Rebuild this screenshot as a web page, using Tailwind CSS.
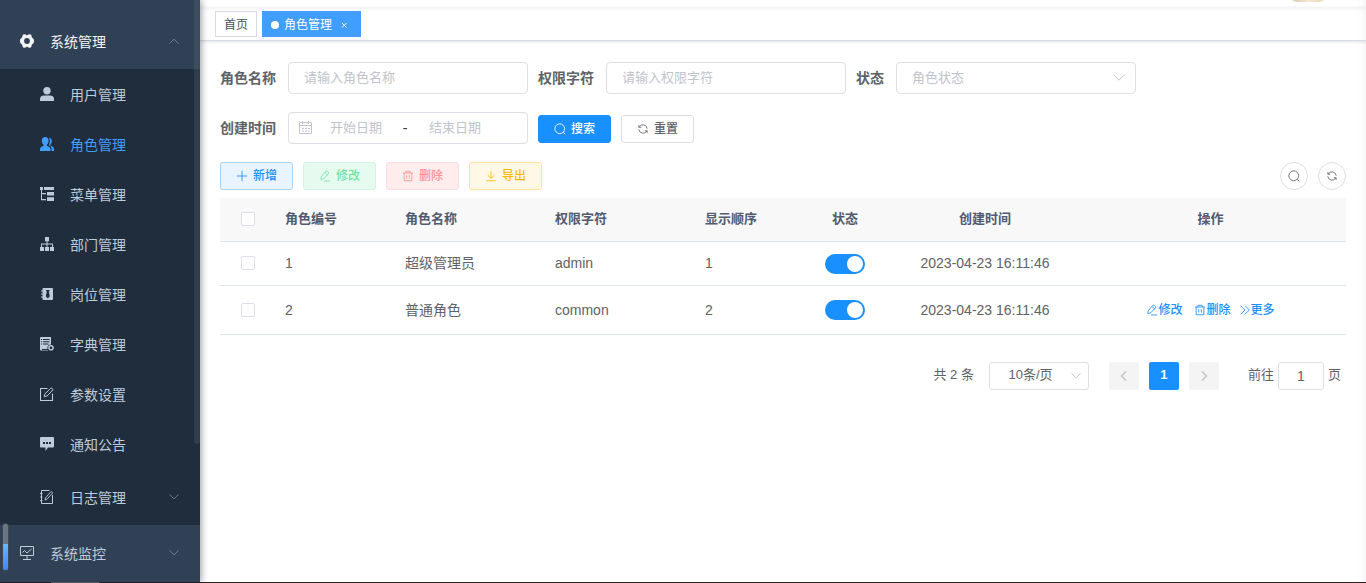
<!DOCTYPE html>
<html lang="zh-CN">
<head>
<meta charset="utf-8">
<meta name="viewport" content="width=device-width, initial-scale=1">
<title>角色管理</title>
<script src="https://cdn.jsdelivr.net/npm/@tailwindcss/browser@4"></script>
</head>
<body class="flex min-h-screen flex-col bg-white font-['Liberation_Sans','Noto_Sans_CJK_SC',sans-serif] text-sm text-[#606266]">

<!-- Shared line icons -->
<svg class="hidden" aria-hidden="true">
  <symbol id="search" viewBox="0 0 14 14"><g fill="none" stroke="currentColor"><circle cx="6.7" cy="6.7" r="5.7"/><path d="M10.7 10.700l2.300 2.300"/></g></symbol>
  <symbol id="refresh" viewBox="0 0 14 14"><g fill="none" stroke="currentColor"><path d="M2.2 5.2V2.4M2.2 4.9h2.7M2.6 4.6A5 5 0 0 1 11.9 6.6M11.8 8.8v2.8M11.8 9.1H9.1M11.4 9.4A5 5 0 0 1 2.1 7.4"/></g></symbol>
  <symbol id="plus" viewBox="0 0 14 14"><path d="M7 1v12M1 7h12" fill="none" stroke="currentColor"/></symbol>
  <symbol id="edit" viewBox="0 0 14 14"><path d="M2.2 11.200l.4-3.300 5.200-6.200a1.400 1.400 0 0 1 2 0l1 .9a1.400 1.400 0 0 1 0 2L5.400 10.300zM7 3l3 2.800M6 12.800h7" fill="none" stroke="currentColor"/></symbol>
  <symbol id="trash" viewBox="0 0 14 14"><path d="M1 3.500h12M4.500 3.500v-2h5v2M2.500 3.500v9h9v-9M5.500 6v4M8.500 6v4" fill="none" stroke="currentColor"/></symbol>
  <symbol id="download" viewBox="0 0 14 14"><path d="M7 1v8.500M3.200 6L7 9.700 10.800 6M1.500 12.500h11" fill="none" stroke="currentColor"/></symbol>
  <symbol id="more" viewBox="0 0 14 14"><path d="M2 2l5 5-5 5M7 2l5 5-5 5" fill="none" stroke="currentColor"/></symbol>
  <symbol id="down" viewBox="0 0 14 14"><path d="M1.800 4L7 9.200 12.200 4" fill="none" stroke="currentColor"/></symbol>
</svg>

<div class="flex flex-1">
  <aside class="relative z-10 w-[200px] shrink-0 bg-[#304156] pt-[13px] text-[#bfcbd9] shadow-[2px_0_6px_rgba(0,21,41,0.35)]">
    <nav>
      <a href="#" class="flex h-14 items-center gap-4 px-5 text-[#f4f4f5]">
        <svg class="size-3.5" viewBox="0 0 14 14"><path fill="currentColor" fill-rule="evenodd" d="M3.400.5Q4.800-.2 5.600.6 7 1.700 8.400.6 9.200-.2 10.600.5q1 .5.900 1.400-.1 1.600 1.300 2.400.8.400 1 1.300.4 1.400 0 2.800-.2.900-1 1.300-1.400.8-1.300 2.400.1.900-.9 1.400-1.400.7-2.200-.1-1.400-1.100-2.800 0-.8.800-2.200.1-1-.5-.9-1.400.1-1.600-1.300-2.400-.8-.4-1-1.300-.4-1.400 0-2.800.2-.9 1-1.300Q2.600 3.500 2.500 1.900 2.400 1 3.400.5zM7 4.100a2.900 2.900 0 1 0 0 5.800 2.900 2.900 0 0 0 0-5.800z"/></svg>
        <span class="flex-1 pt-px">系统管理</span>
        <svg class="size-3 rotate-180 text-[#7f8a98]"><use href="#down"/></svg>
      </a>
      <div class="bg-[#1f2d3d]">
        <a href="#" class="flex h-[50px] items-center gap-4 pr-5 pl-10">
          <svg class="size-3.5" viewBox="0 0 14 14" fill="currentColor"><circle cx="7" cy="3.700" r="3.700"/><path d="M0 14v-2c0-2.500 1.800-3.600 4-3.600h6c2.200 0 4 1.100 4 3.600v2z"/></svg>
          <span class="pt-0.5">用户管理</span>
        </a>
        <a href="#" class="flex h-[50px] items-center gap-4 pr-5 pl-10 text-[#409eff]">
          <svg class="size-3.5" viewBox="0 0 14 14" fill="currentColor"><path d="M5.200 0c2 0 3.400 1.500 3.400 3.700 0 1.800-.8 3.300-1.800 4v1c2.600.8 3.700 1.900 3.700 3.600V14H0v-1.700c0-1.700 1.100-2.800 3.600-3.600v-1c-1-.7-1.800-2.200-1.800-4C1.800 1.500 3.200 0 5.200 0zM8.800.9c1.900-.2 3.100 1.100 3.100 3.200 0 1.500-.6 2.800-1.600 3.500v.8c2.500.9 3.700 2 3.700 3.700V14h-2.500v-2.300c0-1.600-1-2.700-2.500-3.400V7.500c.7-1.200 1-2.500.9-4C9.800 2.400 9.500 1.600 8.800.9z"/></svg>
          <span class="pt-0.5">角色管理</span>
        </a>
        <a href="#" class="flex h-[50px] items-center gap-4 pr-5 pl-10">
          <svg class="size-3.5" viewBox="0 0 14 14" fill="currentColor"><path d="M0 0h3v3H2v3h4v1.200H2V12h4v1.200H1V3H0zM4 0h10v3H4zM7 5h7v3.500H7zM7 10.300h7V14H7z"/></svg>
          <span class="pt-0.5">菜单管理</span>
        </a>
        <a href="#" class="flex h-[50px] items-center gap-4 pr-5 pl-10">
          <svg class="size-3.5" viewBox="0 0 14 14" fill="currentColor"><path d="M5 0h4v4.300H7.500V6.500H13V10h1v4h-4v-4h2V7.500H7.500V10H9v4H5v-4h1.500V7.500H2V10h2v4H0v-4h1V6.500h5.500V4.300H5z"/></svg>
          <span class="pt-0.5">部门管理</span>
        </a>
        <a href="#" class="flex h-[50px] items-center gap-4 pr-5 pl-10">
          <svg class="size-3.5" viewBox="0 0 14 14" fill="currentColor"><path fill-rule="evenodd" d="M3.500 1H12q1 0 1 1v10q0 1-1 1H3.500q-1 0-1-1v-1.500H1v-1h1.500v-2H1v-1h1.500v-2H1v-1h1.500V2q0-1 1-1zM5.800 3l1 1.700-1 4.500 2 2.300 2-2.300-1-4.500 1-1.700z"/></svg>
          <span class="pt-0.5">岗位管理</span>
        </a>
        <a href="#" class="flex h-[50px] items-center gap-4 pr-5 pl-10">
          <svg class="size-3.5" viewBox="0 0 14 14"><path fill="currentColor" fill-rule="evenodd" d="M1 0h10v7.500a3.500 3.500 0 0 0-3.500 4.500H2v1h6v.5H1q-1 0-1-1V1q0-1 1-1zM1 2h1v1H1zM3 2h6.500v1H3zM1 4.300h1v1H1zM3 4.300h6.500v1H3zM1 6.600h1v1H1zM3 6.600h5.500v1H3z"/><circle cx="11" cy="10.800" r="2.100" fill="none" stroke="currentColor" stroke-width="1.400"/></svg>
          <span class="pt-0.5">字典管理</span>
        </a>
        <a href="#" class="flex h-[50px] items-center gap-4 pr-5 pl-10">
          <svg class="size-3.5" viewBox="0 0 14 14" fill="none" stroke="currentColor"><path d="M7.500 1.500h-7v12h12v-7" stroke-width="1.100"/><path d="M4.300 9.700l.6-2.800L11.200.8l2 1.900L7 9z"/></svg>
          <span class="pt-0.5">参数设置</span>
        </a>
        <a href="#" class="flex h-[50px] items-center gap-4 pr-5 pl-10">
          <svg class="size-3.5" viewBox="0 0 14 14"><path fill="currentColor" fill-rule="evenodd" d="M1 0h12q1 0 1 1v8.500q0 1-1 1H8L5.500 14v-3.500H1q-1 0-1-1V1q0-1 1-1zM3 5v2h2V5zM6 5v2h2V5zM9 5v2h2V5z"/></svg>
          <span class="pt-0.5">通知公告</span>
        </a>
        <a href="#" class="flex h-14 items-center gap-4 pr-5 pl-10">
          <svg class="size-3.5" viewBox="0 0 14 14" fill="none" stroke="currentColor"><path d="M12.500 5v8.500h-11V.5h8"/><path d="M0 3.500h2.500M0 7h2.500M0 10.500h2.500" stroke-width=".9"/><path d="M5 10l.6-2.300 5.500-6.200 1.600 1.400L7.200 9z" stroke-width=".9"/></svg>
          <span class="flex-1 pt-0.5">日志管理</span>
          <svg class="size-3 text-[#7f8a98]"><use href="#down"/></svg>
        </a>
      </div>
      <a href="#" class="flex h-14 items-center gap-4 px-5">
        <svg class="size-3.5" viewBox="0 0 14 14" fill="none" stroke="currentColor"><path d="M.5 .5h13v9H.5zM7 9.500V13M3 13.500h8"/><path d="M2.500 6.500l2-2 2.500 2.500L11.500 3"/></svg>
        <span class="flex-1 pt-0.5">系统监控</span>
        <svg class="size-3 text-[#7f8a98]"><use href="#down"/></svg>
      </a>
    </nav>
    <div class="absolute top-0 right-0 h-[444px] w-1.5 rounded-b bg-[#909399]/15"></div>
    <div class="absolute bottom-3 left-[3px] flex h-[46px] w-[5px] flex-col justify-end overflow-hidden rounded-full bg-[#6c7683] ring-1 ring-[#414750]"><div class="h-[26px] bg-linear-to-b from-[#66b8ff] to-[#3f86f5]"></div></div>
  </aside>

  <main class="min-w-0 flex-1 shadow-[inset_-10px_0_8px_-8px_rgba(0,0,0,0.05)]">
    <header class="flex h-[7px] items-end justify-end overflow-hidden pr-[38px] pb-[5px] shadow-[0_1px_4px_rgba(0,21,41,0.08)]">
      <div class="size-10 shrink-0 rounded-[10px] bg-linear-to-r from-[#d9bfa5] via-[#f3e8d0] to-[#e6d2b4]"></div>
    </header>
    <div class="flex h-[34px] items-center gap-[5px] border-b border-[#d8dce5] pl-[15px] text-xs shadow-[0_1px_3px_rgba(0,0,0,0.12)]">
      <a href="#" class="flex h-[26px] items-center border border-[#d8dce5] bg-white px-2 pt-0.5 text-[#495060]">首页</a>
      <a href="#" class="flex h-[26px] items-center border border-[#409eff] bg-[#409eff] px-2 pt-0.5 text-white"><span class="mr-[5px] size-2 rounded-full bg-white"></span>角色管理<svg class="ml-1 size-4" viewBox="0 0 16 16"><path d="M6 6l4.500 4.500M10.500 6L6 10.500" stroke="currentColor"/></svg></a>
    </div>

    <div class="px-5 pt-[21px]">
      <form class="flex flex-wrap items-center gap-x-2.5 gap-y-[18px]">
        <div class="flex items-center">
          <label for="name" class="pr-3 pb-px font-bold">角色名称</label>
          <input id="name" type="text" placeholder="请输入角色名称" class="h-8 w-60 rounded border border-[#dcdfe6] px-[15px] pb-0.5 text-[13px] outline-none placeholder:text-[#c0c4cc]">
        </div>
        <div class="flex items-center">
          <label for="key" class="pr-3 pb-px font-bold">权限字符</label>
          <input id="key" type="text" placeholder="请输入权限字符" class="h-8 w-60 rounded border border-[#dcdfe6] px-[15px] pb-0.5 text-[13px] outline-none placeholder:text-[#c0c4cc]">
        </div>
        <div class="flex items-center">
          <label for="status" class="pr-3 pb-px font-bold">状态</label>
          <div class="relative">
            <select id="status" class="block h-8 w-60 appearance-none rounded border border-[#dcdfe6] bg-white px-[15px] text-[13px] text-[#c0c4cc] outline-none"><option>角色状态</option><option>正常</option><option>停用</option></select>
            <svg class="pointer-events-none absolute top-[9px] right-[10px] size-3.5 text-[#c0c4cc]"><use href="#down"/></svg>
          </div>
        </div>
        <div class="flex w-full items-center">
          <label for="begin" class="pr-3 font-bold">创建时间</label>
          <div class="mr-2.5 flex h-8 w-60 items-center rounded border border-[#dcdfe6] px-2.5 text-[13px]">
            <svg class="size-3.5 shrink-0 text-[#c0c4cc]" viewBox="0 0 14 14" fill="none" stroke="currentColor"><path d="M.5 1.500h12v11H.5zM.5 4.500h12M3.500 0v3M9.500 0v3M3 7.500h2M6 7.500h2M9 7.500h2M3 10h2M6 10h2M9 10h2"/></svg>
            <input id="begin" type="text" placeholder="开始日期" class="w-[86px] text-center outline-none placeholder:text-[#c0c4cc]">
            <span class="w-3 text-center text-sm text-[#303133]">-</span>
            <input aria-label="结束日期" type="text" placeholder="结束日期" class="w-[88px] text-center outline-none placeholder:text-[#c0c4cc]">
          </div>
          <div class="flex gap-2.5 pt-0.5 text-xs font-medium">
            <button type="button" class="flex h-7 items-center gap-[5px] rounded-[3px] border border-[#1890ff] bg-[#1890ff] px-[15px] text-white"><svg class="size-3"><use href="#search"/></svg>搜索</button>
            <button type="button" class="flex h-7 items-center gap-[5px] rounded-[3px] border border-[#dcdfe6] bg-white px-[15px]"><svg class="size-3"><use href="#refresh"/></svg>重置</button>
          </div>
        </div>
      </form>

      <div class="mt-[18px] mb-2 flex gap-2.5 text-xs font-medium">
        <button type="button" class="flex h-7 items-center gap-[5px] rounded-[3px] border border-[#a3d3ff] bg-[#e8f4ff] px-[15px] text-[#1890ff]"><svg class="size-3"><use href="#plus"/></svg>新增</button>
        <button type="button" class="flex h-7 items-center gap-[5px] rounded-[3px] border border-[#d0f5e0] bg-[#e7faf0] px-[15px] text-[#71e2a3]"><svg class="size-3"><use href="#edit"/></svg>修改</button>
        <button type="button" class="flex h-7 items-center gap-[5px] rounded-[3px] border border-[#ffdbdb] bg-[#ffeded] px-[15px] text-[#ff9292]"><svg class="size-3"><use href="#trash"/></svg>删除</button>
        <button type="button" class="flex h-7 items-center gap-[5px] rounded-[3px] border border-[#ffe399] bg-[#fff8e6] px-[15px] text-[#ffba00]"><svg class="size-3"><use href="#download"/></svg>导出</button>
        <button type="button" aria-label="隐藏搜索" class="ml-auto flex size-7 items-center justify-center rounded-full border border-[#dcdfe6]"><svg class="size-3"><use href="#search"/></svg></button>
        <button type="button" aria-label="刷新" class="flex size-7 items-center justify-center rounded-full border border-[#dcdfe6]"><svg class="size-3"><use href="#refresh"/></svg></button>
      </div>

      <table class="w-full table-fixed">
        <colgroup><col class="w-[55px]"><col class="w-[120px]"><col class="w-[150px]"><col class="w-[150px]"><col class="w-[100px]"><col class="w-[100px]"><col class="w-[180px]"><col></colgroup>
        <thead>
          <tr class="h-[43px] border-b border-[#dfe6ec] bg-[#f8f8f9] text-left text-[13px] text-[#515a6e]">
            <th><input type="checkbox" aria-label="全选" class="mx-auto block size-3.5 appearance-none rounded-xs border border-[#dcdfe6] bg-white"></th>
            <th class="px-2.5">角色编号</th><th class="px-2.5">角色名称</th><th class="px-2.5">权限字符</th><th class="px-2.5">显示顺序</th>
            <th class="text-center">状态</th><th class="text-center">创建时间</th><th class="text-center">操作</th>
          </tr>
        </thead>
        <tbody>
          <tr class="h-11 border-b border-[#dfe6ec]">
            <td><input type="checkbox" aria-label="选择超级管理员" class="mx-auto block size-3.5 appearance-none rounded-xs border border-[#dcdfe6] bg-white"></td>
            <td class="px-2.5">1</td><td class="px-2.5">超级管理员</td><td class="px-2.5">admin</td><td class="px-2.5">1</td>
            <td class="pt-px"><input type="checkbox" role="switch" aria-label="超级管理员状态" checked class="mx-auto flex h-5 w-10 appearance-none items-center justify-end rounded-full bg-[#1890ff] px-0.5 before:size-4 before:rounded-full before:bg-white before:content-['']"></td>
            <td class="text-center">2023-04-23 16:11:46</td><td></td>
          </tr>
          <tr class="h-[49px] border-b border-[#dfe6ec]">
            <td><input type="checkbox" aria-label="选择普通角色" class="mx-auto block size-3.5 appearance-none rounded-xs border border-[#dcdfe6] bg-white"></td>
            <td class="px-2.5">2</td><td class="px-2.5">普通角色</td><td class="px-2.5">common</td><td class="px-2.5">2</td>
            <td class="pt-px"><input type="checkbox" role="switch" aria-label="普通角色状态" checked class="mx-auto flex h-5 w-10 appearance-none items-center justify-end rounded-full bg-[#1890ff] px-0.5 before:size-4 before:rounded-full before:bg-white before:content-['']"></td>
            <td class="text-center">2023-04-23 16:11:46</td>
            <td>
              <div class="flex justify-center text-xs font-medium text-[#1890ff]">
                <button type="button" class="mr-3 flex items-center"><svg class="size-3"><use href="#edit"/></svg>修改</button>
                <button type="button" class="mr-2 flex items-center"><svg class="size-3"><use href="#trash"/></svg>删除</button>
                <button type="button" class="flex items-center"><svg class="size-3"><use href="#more"/></svg>更多</button>
              </div>
            </td>
          </tr>
        </tbody>
      </table>

      <div class="mt-[27px] flex h-7 items-center justify-end pr-[5px] text-[13px]">
        <span class="mr-[15px]">共 2 条</span>
        <div class="relative mr-5">
          <select aria-label="每页条数" class="block h-7 w-[100px] appearance-none rounded-[3px] border border-[#dcdfe6] bg-white pr-[17px] text-center outline-none"><option>10条/页</option><option>20条/页</option></select>
          <svg class="pointer-events-none absolute top-2 right-[7px] size-3 text-[#c0c4cc]"><use href="#down"/></svg>
        </div>
        <button type="button" aria-label="上一页" class="mr-2.5 flex h-7 w-[30px] items-center justify-center rounded-xs bg-[#f4f4f5] text-[#c0c4cc]"><svg class="size-3" viewBox="0 0 12 12"><path d="M8 1.500L3.500 6 8 10.500" fill="none" stroke="currentColor" stroke-width="1.500"/></svg></button>
        <button type="button" class="mr-2.5 h-7 w-[30px] rounded-xs bg-[#1890ff] font-bold text-white">1</button>
        <button type="button" aria-label="下一页" class="mr-[29px] flex h-7 w-[30px] items-center justify-center rounded-xs bg-[#f4f4f5] text-[#c0c4cc]"><svg class="size-3" viewBox="0 0 12 12"><path d="M4 1.500L8.500 6 4 10.500" fill="none" stroke="currentColor" stroke-width="1.500"/></svg></button>
        <label for="page">前往</label>
        <input id="page" type="text" value="1" class="mx-1 h-7 w-[46px] rounded-[3px] border border-[#dcdfe6] text-center text-sm outline-none">
        <span>页</span>
      </div>
    </div>
  </main>
</div>
<footer class="h-px bg-[#33211f] pl-[51px]"><div class="h-px w-12 bg-[#6d625f]"></div></footer>
</body>
</html>
